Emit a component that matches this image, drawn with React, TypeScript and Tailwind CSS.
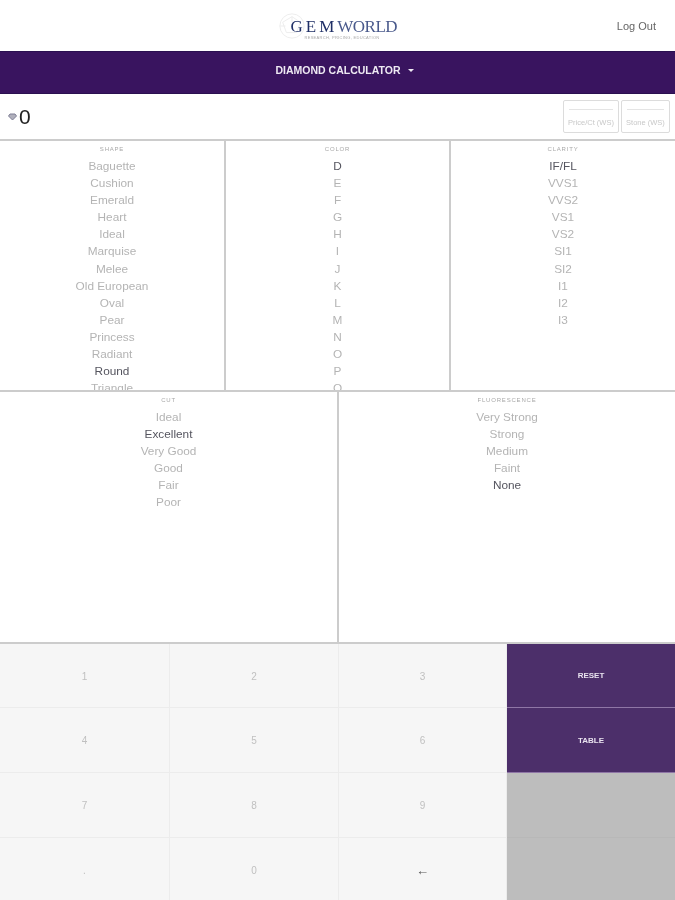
import React from "react";

const shapes = ["Baguette", "Cushion", "Emerald", "Heart", "Ideal", "Marquise", "Melee", "Old European", "Oval", "Pear", "Princess", "Radiant", "Round", "Triangle"];
const colors = ["D", "E", "F", "G", "H", "I", "J", "K", "L", "M", "N", "O", "P", "Q"];
const clarity = ["IF/FL", "VVS1", "VVS2", "VS1", "VS2", "SI1", "SI2", "I1", "I2", "I3"];
const cuts = ["Ideal", "Excellent", "Very Good", "Good", "Fair", "Poor"];
const fluor = ["Very Strong", "Strong", "Medium", "Faint", "None"];

function Column({ title, items, active, className }: { title: string; items: string[]; active: string; className: string }) {
  return (
    <div className={"flex flex-col items-center overflow-hidden pt-[4px] " + className}>
      <div className="h-[13px] shrink-0 text-[6px] leading-[8px] tracking-[0.8px] text-[#a8a8a8]">{title}</div>
      {items.map((item) => (
        <div key={item} className={"h-[17.1px] shrink-0 text-[11.8px] leading-[17px] " + (item === active ? "text-[#55555f]" : "text-[#b4b4b4]")}>
          {item}
        </div>
      ))}
    </div>
  );
}

function Key({ label, dark }: { label: string; dark?: boolean }) {
  return (
    <div className={"flex items-center justify-center border-r border-b border-[#ececec] bg-[#f6f6f6] pt-[1px] " + (dark ? "text-[13px] text-[#555555]" : "text-[10px] text-[#c0c0c0]")}>
      {label}
    </div>
  );
}

function Action({ label }: { label: string }) {
  return (
    <div className="flex items-center justify-center border-b border-[#8f76a6] bg-[#4c2f6a] pt-[1px] text-[8px] font-bold text-[#e9e3ef]">
      {label}
    </div>
  );
}

function PriceBox({ label, width }: { label: string; width: string }) {
  return (
    <div className={"flex h-[33px] flex-col rounded-[2px] border border-[#dcdcdc] pt-[8px] " + width}>
      <div className="mx-[5px] border-t border-[#e4e4e4]" />
      <div className="mt-[8px] whitespace-nowrap text-center text-[7.5px] leading-[10px] text-[#c8c8c8]">{label}</div>
    </div>
  );
}

export default function App() {
  return (
    <div className="flex h-[900px] w-[675px] flex-col overflow-hidden bg-white font-['Liberation_Sans',sans-serif] blur-[0.4px]">
      <header className="relative flex h-[51px] shrink-0 items-center justify-center">
        <div className="relative flex h-[34px] w-[120px] flex-col items-start pl-[13px] pt-[9px]">
          <svg className="absolute left-0 top-[3px]" width="28" height="28" viewBox="0 0 30 30" fill="none" stroke="#ececec" strokeWidth="1">
            <circle cx="15" cy="15" r="13" />
            <path d="M5 11 15 5l9 6-4 11H9zM2 15h6M15 5v6" />
          </svg>
          <div className="relative whitespace-nowrap font-['Liberation_Serif',serif] text-[17px] leading-[17px]">
            <span className="tracking-[3px] text-[#1f2f66]">GEM</span>
            <span className="tracking-[-0.5px] text-[#4a5a8c]">WORLD</span>
          </div>
          <div className="relative ml-[14px] text-[4px] leading-[5px] tracking-[0.3px] text-[#a8a8a8]">RESEARCH, PRICING, EDUCATION</div>
        </div>
        <div className="absolute right-[19px] top-[19px] text-[11px] leading-[14px] text-[#666666]">Log Out</div>
      </header>
      <nav className="flex h-[43px] shrink-0 items-center justify-center gap-[7px] border-y border-[#2a1050] bg-[#39145f] pb-[4px] pl-[14px] text-[10.5px] font-bold text-[#eeeaf3]">
        DIAMOND CALCULATOR
        <span className="h-0 w-0 border-x-[3.5px] border-t-[3.5px] border-x-transparent border-t-[#eeeaf3]" />
      </nav>
      <section className="flex h-[47px] shrink-0 items-center justify-between border-b-2 border-[#cccccc] pl-[8px] pr-[5px]">
        <div className="flex items-center gap-[2px]">
          <svg width="9" height="8" viewBox="0 0 9 8" fill="#b0b0bc" stroke="#7f7f95" strokeWidth="1">
            <path d="M2 1h5l1.500 2L4.500 7 .5 3z" />
          </svg>
          <span className="text-[21px] leading-[24px] text-[#222222]">0</span>
        </div>
        <div className="flex gap-[2px]">
          <PriceBox label="Price/Ct (WS)" width="w-[56px]" />
          <PriceBox label="Stone (WS)" width="w-[49px]" />
        </div>
      </section>
      <section className="grid h-[251px] shrink-0 grid-cols-[226px_225px_1fr] border-b-2 border-[#cccccc]">
        <Column title="SHAPE" items={shapes} active="Round" className="border-r-2 border-[#cccccc]" />
        <Column title="COLOR" items={colors} active="D" className="border-r-2 border-[#cccccc]" />
        <Column title="CLARITY" items={clarity} active="IF/FL" className="" />
      </section>
      <section className="grid h-[252px] shrink-0 grid-cols-[339px_1fr] border-b-2 border-[#cccccc]">
        <Column title="CUT" items={cuts} active="Excellent" className="border-r-2 border-[#cccccc]" />
        <Column title="FLUORESCENCE" items={fluor} active="None" className="" />
      </section>
      <section className="grid h-[259px] shrink-0 grid-cols-[170px_169px_168px_1fr] grid-rows-[64px_65px_65px_65px]">
        <Key label="1" />
        <Key label="2" />
        <Key label="3" />
        <Action label="RESET" />
        <Key label="4" />
        <Key label="5" />
        <Key label="6" />
        <Action label="TABLE" />
        <Key label="7" />
        <Key label="8" />
        <Key label="9" />
        <div className="border-b border-[#b8b8b8] bg-[#bdbdbd]" />
        <Key label="." />
        <Key label="0" />
        <Key label="←" dark />
        <div className="bg-[#bdbdbd]" />
      </section>
    </div>
  );
}
